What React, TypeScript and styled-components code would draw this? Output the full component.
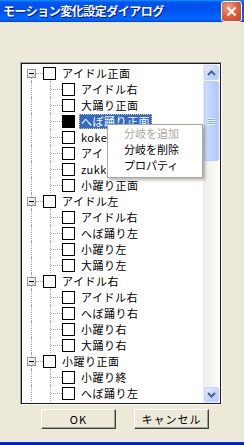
import React from "react";
import styled, { createGlobalStyle, css } from "styled-components";

type Node = { label: string; children: string[] };

const tree: Node[] = [
  {
    label: "アイドル正面",
    children: ["アイドル右", "大踊り正面", "へぼ踊り正面", "koke", "アイ", "zukk", "小躍り正面"],
  },
  { label: "アイドル左", children: ["アイドル右", "へぼ踊り左", "小躍り左", "大踊り左"] },
  { label: "アイドル右", children: ["アイドル右", "へぼ踊り右", "小躍り右", "大踊り右"] },
  { label: "小躍り正面", children: ["小躍り終", "へぼ踊り左"] },
];

const SELECTED = "0-2";

const App: React.FC = () => {
  return (
    <Window>
      <GlobalStyle />
      <TitleBar>
        <Title>モーション変化設定ダイアログ</Title>
        <CloseButton>
          <svg width="11" height="11" viewBox="0 0 11 11">
            <path d="M1.5 1.5 L9.5 9.5 M9.5 1.5 L1.5 9.5" stroke="#fff" strokeWidth="2" />
          </svg>
        </CloseButton>
      </TitleBar>

      <Body>
        <TreeBox>
          <TreeInner>
            <List>
              {tree.map((node, i) => (
                <React.Fragment key={i}>
                  <Row>
                    <Gutter $v={i === 0 ? "down" : "full"} $h $root>
                      <Expander />
                    </Gutter>
                    <Check />
                    <Label>{node.label}</Label>
                  </Row>
                  {node.children.map((child, j) => {
                    const selected = `${i}-${j}` === SELECTED;
                    return (
                      <Row key={j}>
                        <Gutter $v="full" />
                        <Gutter $v="full" $h />
                        <Check $checked={selected} />
                        <Label $selected={selected}>{child}</Label>
                      </Row>
                    );
                  })}
                </React.Fragment>
              ))}
            </List>
            <ScrollBar>
              <ScrollButton>
                <svg width="9" height="6" viewBox="0 0 9 6">
                  <path d="M1 5 L4.5 1.5 L8 5" stroke="#4D6185" strokeWidth="2" fill="none" />
                </svg>
              </ScrollButton>
              <Thumb>
                <Grip />
              </Thumb>
              <Track />
              <ScrollButton>
                <svg width="9" height="6" viewBox="0 0 9 6">
                  <path d="M1 1 L4.5 4.5 L8 1" stroke="#4D6185" strokeWidth="2" fill="none" />
                </svg>
              </ScrollButton>
            </ScrollBar>
          </TreeInner>
        </TreeBox>

        <ButtonRow>
          <Button>OK</Button>
          <Button>キャンセル</Button>
        </ButtonRow>
      </Body>
      <BottomEdge />

      <Menu>
        <MenuItem $disabled>分岐を追加</MenuItem>
        <MenuItem>分岐を削除</MenuItem>
        <MenuItem>プロパティ</MenuItem>
      </Menu>
    </Window>
  );
};

const GlobalStyle = createGlobalStyle`
  html, body {
    margin: 0;
    padding: 0;
    background: #ece9d8;
  }
  body {
    font-family: "Noto Sans CJK JP", "DejaVu Sans", sans-serif;
  }
`;

const Window = styled.div`
  position: relative;
  width: 244px;
  height: 445px;
  display: flex;
  flex-direction: column;
  background: #ece9d8;
  overflow: hidden;
`;

const TitleBar = styled.div`
  height: 22px;
  flex-shrink: 0;
  display: flex;
  align-items: center;
  justify-content: space-between;
  padding: 0 2px 0 3px;
  background: linear-gradient(
    #0997ff 0%,
    #0053ee 10%,
    #0050ee 40%,
    #0066ff 85%,
    #005bff 93%,
    #003dd7 100%
  );
`;

const Title = styled.div`
  color: #fff;
  font-size: 12px;
  font-weight: bold;
  letter-spacing: -0.5px;
  line-height: 22px;
  text-shadow: 1px 1px 0 #0a1883;
`;

const CloseButton = styled.div`
  width: 19px;
  height: 19px;
  border: 1px solid #fff;
  border-radius: 3px;
  display: flex;
  align-items: center;
  justify-content: center;
  background: radial-gradient(circle at 35% 30%, #f0a08a 0%, #e2643f 45%, #c2401c 100%);
`;

const Body = styled.div`
  flex: 1;
  display: flex;
  flex-direction: column;
  padding: 40px 0 0 20px;
`;

const TreeBox = styled.div`
  width: 202px;
  height: 343px;
  box-sizing: border-box;
  border: 1px solid;
  border-color: #a0a0a0 #ffffff #ffffff #a0a0a0;
`;

const TreeInner = styled.div`
  height: 100%;
  box-sizing: border-box;
  border: 1px solid #1a1a1a;
  display: flex;
  background: #fff;
`;

const List = styled.div`
  flex: 1;
  overflow: hidden;
  padding-top: 1px;
  background: #fff;
`;

const Row = styled.div`
  height: 16px;
  display: flex;
  align-items: center;
  white-space: nowrap;
`;

const dotted = "1px dotted #a0a0a0";

const Gutter = styled.div<{ $v: "full" | "down" | "none"; $h?: boolean; $root?: boolean }>`
  position: relative;
  width: 19px;
  height: 16px;
  flex-shrink: 0;

  &::before {
    content: "";
    position: absolute;
    left: 9px;
    width: 0;
    border-left: ${dotted};
    ${(p) =>
      p.$v === "full"
        ? css`top: 0; bottom: 0;`
        : p.$v === "down"
        ? css`top: 8px; bottom: 0;`
        : css`display: none;`}
  }

  &::after {
    content: "";
    position: absolute;
    top: 8px;
    left: ${(p) => (p.$root ? 14 : 10)}px;
    right: -2px;
    border-top: ${dotted};
    display: ${(p) => (p.$h ? "block" : "none")};
  }
`;

const Expander = styled.div`
  position: absolute;
  z-index: 1;
  left: 5px;
  top: 4px;
  width: 9px;
  height: 9px;
  box-sizing: border-box;
  border: 1px solid #919b9c;
  background: linear-gradient(135deg, #ffffff, #d8d4c8);

  &::after {
    content: "";
    position: absolute;
    left: 1px;
    top: 3px;
    width: 5px;
    height: 1px;
    background: #000;
  }
`;

const Check = styled.div<{ $checked?: boolean }>`
  width: 13px;
  height: 13px;
  margin-left: 2px;
  flex-shrink: 0;
  box-sizing: border-box;
  border: 1px solid #000;
  background: ${(p) => (p.$checked ? "#000" : "#fff")};
`;

const Label = styled.span<{ $selected?: boolean }>`
  margin-left: 4px;
  padding: 0 2px;
  height: 15px;
  line-height: 15px;
  font-size: 11px;
  letter-spacing: 0.5px;
  color: ${(p) => (p.$selected ? "#fff" : "#000")};
  background: ${(p) => (p.$selected ? "#316ac5" : "transparent")};
  outline: ${(p) => (p.$selected ? "1px dotted #e8c870" : "none")};
  outline-offset: -1px;
`;

const ScrollBar = styled.div`
  width: 17px;
  flex-shrink: 0;
  display: flex;
  flex-direction: column;
  background: linear-gradient(to right, #eeede5, #fdfdfa);
`;

const ScrollButton = styled.div`
  height: 15px;
  margin: 1px;
  flex-shrink: 0;
  box-sizing: border-box;
  border: 1px solid #c3d3fd;
  border-radius: 2px;
  display: flex;
  align-items: center;
  justify-content: center;
  background: linear-gradient(135deg, #e6eefe 0%, #c6d6fc 55%, #b4c8f6 100%);
`;

const Thumb = styled.div`
  height: 80px;
  margin: 0 1px;
  flex-shrink: 0;
  box-sizing: border-box;
  border: 1px solid #b8ccf8;
  border-radius: 2px;
  display: flex;
  align-items: center;
  justify-content: center;
  background: linear-gradient(to right, #cddcfd 0%, #bcd1fb 60%, #b1c7f6 100%);
`;

const Grip = styled.div`
  width: 7px;
  height: 7px;
  background: repeating-linear-gradient(#eef4fe 0px, #eef4fe 1px, #8caaf0 1px, #8caaf0 2px);
`;

const Track = styled.div`
  flex: 1;
`;

const ButtonRow = styled.div`
  display: flex;
  gap: 18px;
  margin-top: 4px;
  padding-left: 21px;
`;

const Button = styled.div`
  width: 75px;
  height: 20px;
  box-sizing: border-box;
  display: flex;
  align-items: center;
  justify-content: center;
  font-size: 11px;
  letter-spacing: 1px;
  color: #000;
  background: #ece9d8;
  border: 1px solid;
  border-color: #ffffff #404040 #404040 #ffffff;
  box-shadow: inset -1px -1px 0 #a0a0a0;
`;

const BottomEdge = styled.div`
  height: 3px;
  flex-shrink: 0;
  background: linear-gradient(#0831d9, #001ea0);
`;

const Menu = styled.div`
  position: absolute;
  left: 107px;
  top: 124px;
  width: 96px;
  height: 54px;
  box-sizing: border-box;
  border: 1px solid #aca899;
  background: #fff;
  box-shadow: 2px 2px 3px rgba(0, 0, 0, 0.3);
  z-index: 5;
`;

const MenuItem = styled.div<{ $disabled?: boolean }>`
  height: 16px;
  line-height: 16px;
  padding-left: 16px;
  font-size: 11px;
  letter-spacing: 0px;
  white-space: nowrap;
  color: ${(p) => (p.$disabled ? "#aca899" : "#000")};
`;

export default App;
